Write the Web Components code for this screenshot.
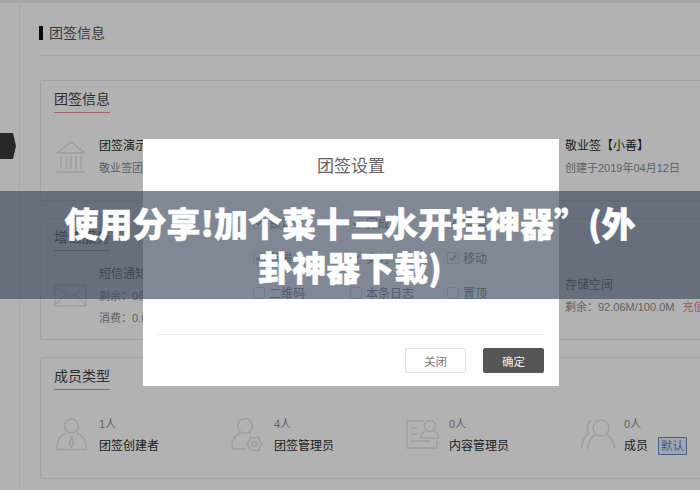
<!DOCTYPE html>
<html lang="zh">
<head>
<meta charset="utf-8">
<title>团签设置</title>
<style>
html,body{margin:0;height:490px;overflow:hidden;background:#fff}
body{font-family:"Liberation Sans","Noto Sans CJK SC",sans-serif;color:#333}
svg{display:block;fill:none;stroke:#e3e3e3;stroke-width:1.5}
em{font-style:normal;color:#d98a8a;margin-left:8px}
</style>
</head>
<body>
<team-page>
  <info-card title="团签信息" style="height:121px">
    <info-item>
      <svg slot="icon" width="30" height="33" viewBox="0 0 30 33"><path d="M1 12 15 1l14 11M1 12h28M5 15v13M10.500 15v13M15 15v13M20 15v13M25 15v13M0 31h30"/></svg>
      <b>团签演示</b><small>敬业签团队</small>
    </info-item>
    <info-item>
      <b>敬业签【小善】</b><small>创建于2019年04月12日</small>
    </info-item>
  </info-card>
  <info-card title="增值服务">
    <info-item>
      <svg slot="icon" width="33" height="23" viewBox="0 0 33 23" style="margin-left:-2px"><rect x="1" y="1" width="31" height="21" rx="1"/><path d="m1 2 15.500 11L32 2M1 21l11-11M32 21 21 10"/></svg>
      <span>短信通知</span><small>剩余：0条</small><small>消费：0.0元</small>
    </info-item>
    <info-item>
      <span>存储空间</span><small>剩余：92.06M/100.0M<em>充值</em></small>
    </info-item>
  </info-card>
  <info-card title="成员类型" columns="175px 175px 175px 1fr">
    <info-item>
      <svg slot="icon" width="31" height="33" viewBox="0 0 31 33"><circle cx="15.500" cy="8" r="7"/><path d="M10 15C4 17 .7 23 .7 31.500h29.600C30.300 23 27 17 21 15M15.500 18l-2 8 2 3 2-3z"/></svg>
      <small>1人</small><b>团签创建者</b>
    </info-item>
    <info-item>
      <svg slot="icon" width="33" height="33" viewBox="0 0 33 33"><circle cx="14" cy="8" r="7.500"/><path d="M9 15C4 17 1 23 1 27c0 2.500 1 4 3 4h10M20 15.500l-2-1"/><path transform="translate(.5 2)" d="M31 24 28.200 27 27 30.900 23 30 19 30.900 17.800 27 15 24 17.800 21 19 17.100 23 18 27 17.100 28.200 21z"/><circle cx="23.500" cy="26" r="2.500"/></svg>
      <small>4人</small><b>团签管理员</b>
    </info-item>
    <info-item>
      <svg slot="icon" width="33" height="33" viewBox="0 0 33 33"><path d="M18 3H1v27h30v-7M5 10h6M5 16h6M5 23h19"/><circle cx="24" cy="8" r="5.500"/><path d="M19 13c-3 1.500-4 4-4.500 6.500M29 13c2 1.500 3.500 4 3.500 7H15"/></svg>
      <small>0人</small><b>内容管理员</b>
    </info-item>
    <info-item>
      <svg slot="icon" width="34" height="33" viewBox="0 0 34 33"><circle cx="20" cy="10" r="8"/><path d="M14 17C9 20 7 25 7 31M26 17c5 3 7.500 8 7.500 14M10 3C6 4 5 11 8 15 3 18 1 24 1 30"/></svg>
      <small>0人</small><b>成员<tag-badge>默认</tag-badge></b>
    </info-item>
  </info-card>
</team-page>
<dim-backdrop></dim-backdrop>
<settings-dialog title="团签设置">
  <check-option checked>锁定</check-option>
  <check-option checked>完成</check-option>
  <check-option checked>提醒</check-option>
  <check-option checked>背景</check-option>
  <check-option checked>实时</check-option>
  <check-option checked>移动</check-option>
  <check-option>二维码</check-option>
  <check-option>本条日志</check-option>
  <check-option>置顶</check-option>
</settings-dialog>
<title-banner>使用分享!加个菜十三水开挂神器”(外卦神器下载)</title-banner>

<script>
function shadow(el, html){
    el.attachShadow({mode:'open'}).innerHTML = html
}

class TeamPage extends HTMLElement{
    constructor(){
        super();
        shadow(this, `<style>
        :host{display:flex;flex-direction:column;height:490px;overflow:hidden}
        .strip{height:3px;background:#eee;flex:none}
        .wrap{display:flex;flex:1}
        .side{width:19px;border-right:1px solid #f0f0f0;position:relative;flex:none}
        .pill{position:absolute;left:0;top:130px;width:16px;height:26px;background:#3a3a3a;
            clip-path:polygon(0 0,13px 0,16px 13px,13px 100%,0 100%)}
        .main{flex:1;padding-left:20px;min-width:0;display:flex;flex-direction:column}
        h1{margin:0 0 24px;height:53px;box-sizing:border-box;border-bottom:1px solid #f0f0f0;
            font:400 14px/1 "Liberation Sans","Noto Sans CJK SC",sans-serif;color:#555;
            display:flex;align-items:center;padding-top:8px}
        h1 i{width:4px;height:14px;background:#111;margin-right:6px;margin-left:-1px}
        .cards{display:flex;flex-direction:column;gap:17px;margin-right:-6px}
        </style>
        <div class="strip"></div>
        <div class="wrap">
          <div class="side"><div class="pill"></div></div>
          <div class="main">
            <h1><i></i>团签信息</h1>
            <div class="cards"><slot></slot></div>
          </div>
        </div>`)
    }
}

class InfoCard extends HTMLElement{
    constructor(){
        super();
        shadow(this, `<style>
        :host{display:flex;flex-direction:column;height:122px;box-sizing:border-box;
            border:1px solid #eaeaea;border-radius:2px;padding-left:13px}
        h2{margin:8px 0 0;align-self:flex-start;font:400 14px/20px "Liberation Sans","Noto Sans CJK SC",sans-serif;
            color:#444;padding-bottom:3px;border-bottom:1px solid #e58f95}
        .body{flex:1;display:grid;align-items:center;padding:1px 0 0 2px}
        </style>
        <h2></h2>
        <div class="body"><slot></slot></div>`)
    }
    connectedCallback(){
        this.shadowRoot.querySelector('h2').textContent = this.getAttribute('title')
        this.removeAttribute('title')
        this.shadowRoot.querySelector('.body').style.gridTemplateColumns = this.getAttribute('columns') || '466px 1fr'
    }
}

class InfoItem extends HTMLElement{
    constructor(){
        super();
        shadow(this, `<style>
        :host{display:flex;align-items:center;min-width:0;white-space:nowrap}
        .icon{width:43px;flex:none}
        .text{display:flex;flex-direction:column;font-size:12px;line-height:22px;color:#555}
        ::slotted(b){font-weight:400;color:#2c2c2c;display:flex;align-items:center}
        ::slotted(small){font-size:11px;color:#8c8c8c}
        </style>
        <div class="icon"><slot name="icon"></slot></div>
        <div class="text"><slot></slot></div>`)
    }
}

class TagBadge extends HTMLElement{
    constructor(){
        super();
        shadow(this, `<style>
        :host{display:inline-block;margin-left:10px;width:29px;height:18px;box-sizing:border-box;
            border:1px solid #5f88c0;border-radius:1px;background:#e6eefa;color:#5f88c0;
            font-size:11.500px;line-height:16px;text-align:center}
        </style><slot></slot>`)
    }
}

class DimBackdrop extends HTMLElement{
    constructor(){
        super();
        shadow(this, `<style>:host{position:absolute;inset:0;background:rgba(0,0,0,.3)}</style>`)
    }
}

class SettingsDialog extends HTMLElement{
    constructor(){
        super();
        shadow(this, `<style>
        :host{position:absolute;left:143px;top:139px;width:416px;height:247px;background:#fff;
            display:flex;flex-direction:column}
        h3{margin:0;padding-top:17px;height:45px;box-sizing:border-box;text-align:center;
            font:400 17px/22px "Liberation Sans","Noto Sans CJK SC",sans-serif;color:#666}
        .grid{display:grid;grid-template-columns:repeat(3,97px);grid-auto-rows:35px;
            margin:21px 0 0 110px;height:129px;align-items:center;align-content:start}
        .foot{margin:0 15px;border-top:1px solid #eee;padding-top:13px;display:flex;justify-content:flex-end;gap:17px}
        button{width:61px;height:25px;box-sizing:border-box;border:1px solid #e2e2e2;border-radius:2px;
            background:#fff;color:#777;font:400 11.500px "Liberation Sans","Noto Sans CJK SC",sans-serif;padding:0}
        button.ok{background:#555;border-color:#555;color:#eee}
        </style>
        <h3></h3>
        <div class="grid"><slot></slot></div>
        <div class="foot"><button>关闭</button><button class="ok">确定</button></div>`)
    }
    connectedCallback(){
        this.shadowRoot.querySelector('h3').textContent = this.getAttribute('title')
        this.removeAttribute('title')
    }
}

class CheckOption extends HTMLElement{
    constructor(){
        super();
        shadow(this, `<style>
        :host{display:flex;align-items:center;gap:4px;font-size:12px;color:#777;white-space:nowrap}
        .box{width:12px;height:12px;box-sizing:border-box;border:1px solid #d8d8d8;border-radius:2px;flex:none}
        svg{display:block;fill:none;stroke:#888;stroke-width:1.200}
        </style>
        <span class="box"></span><slot></slot>`)
    }
    connectedCallback(){
        if(this.hasAttribute('checked')){
            this.shadowRoot.querySelector('.box').innerHTML =
                '<svg width="10" height="10" viewBox="0 0 10 10"><path d="m2 5 2 2 4-4.500"/></svg>'
        }
    }
}

class TitleBanner extends HTMLElement{
    constructor(){
        super();
        shadow(this, `<style>
        :host{position:absolute;left:0;right:0;top:191px;height:108px;box-sizing:border-box;
            background:rgba(67,79,99,.675);color:#fff;display:flex;align-items:center;justify-content:center;
            padding:0 60px;text-align:center;-webkit-text-stroke:.5px #fff;
            font:900 34px/44px "Noto Sans CJK SC",sans-serif}
        </style><slot></slot>`)
    }
}

customElements.define('team-page',TeamPage)
customElements.define('info-card',InfoCard)
customElements.define('info-item',InfoItem)
customElements.define('tag-badge',TagBadge)
customElements.define('dim-backdrop',DimBackdrop)
customElements.define('settings-dialog',SettingsDialog)
customElements.define('check-option',CheckOption)
customElements.define('title-banner',TitleBanner)
</script>
</body>
</html>
